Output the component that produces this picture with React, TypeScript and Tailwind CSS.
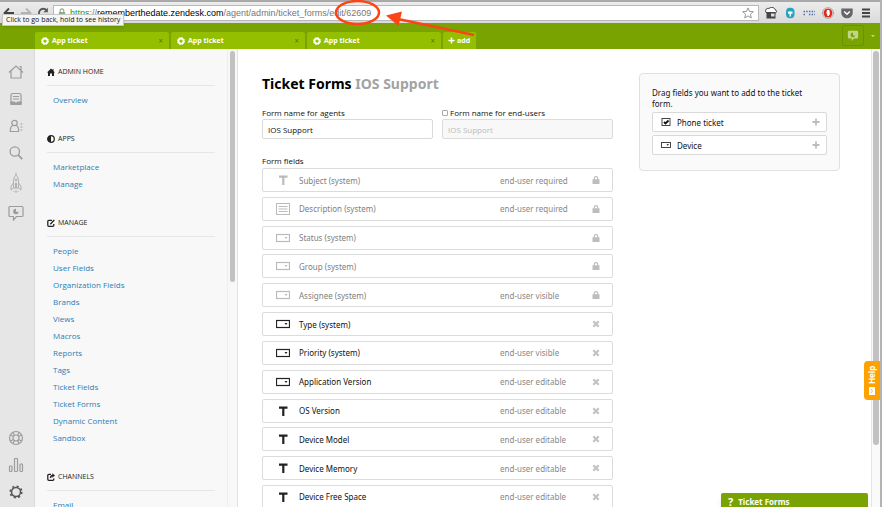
import { Fragment, type ReactNode } from "react";

const UI = "font-['Open_Sans','Noto_Sans',sans-serif]";

function TabIcon() {
  return (
    <svg viewBox="0 0 16 16" className="size-2 shrink-0" fill="none" stroke="white">
      <circle cx="8" cy="8" r="5" strokeWidth="3.5" />
      <circle cx="8" cy="8" r="7" strokeWidth="2" strokeDasharray="3 2.5" />
    </svg>
  );
}

function ArrowIcon({ flip, color }: { flip?: boolean; color: string }) {
  return (
    <svg viewBox="0 0 12 12" className={flip ? "size-3 -scale-x-100" : "size-3"} fill="none" stroke={color} strokeWidth="1.8">
      <path d="M11 6H2M6 1.5 1.5 6 6 10.5" />
    </svg>
  );
}

function BrowserBar() {
  return (
    <div className="relative flex h-[23px] shrink-0 items-center border-t-2 border-[#a9a9a9] bg-gradient-to-b from-[#ececec] to-[#dadada] pr-2">
      <button aria-label="Back" className="ml-[3px]"><ArrowIcon color="#444" /></button>
      <button aria-label="Forward" className="ml-[5px]"><ArrowIcon flip color="#b5b5b5" /></button>
      <button aria-label="Reload" className="ml-[5px]">
        <svg viewBox="0 0 12 12" className="size-3" fill="none" stroke="#555" strokeWidth="1.8">
          <path d="M9.5 3.2A4.3 4.3 0 1 0 10.3 7.5" />
          <path d="M10.8.8v4.4H6.4z" fill="#555" stroke="none" />
        </svg>
      </button>
      <div className="ml-1 flex h-4 min-w-0 flex-1 items-center border border-[#b9b9b9] bg-white px-1">
        <svg viewBox="0 0 8 10" className="mr-1 h-[9px] w-2 shrink-0">
          <path d="M2 5V3a2 2 0 0 1 4 0v2" fill="none" stroke="#999" strokeWidth="1.2" />
          <rect x="0.5" y="4.5" width="7" height="5" rx=".8" fill="#83b873" />
        </svg>
        <div className="min-w-0 flex-1 whitespace-nowrap font-['Liberation_Sans',Arial,sans-serif] text-[9px] leading-3 text-[#777]">
          <span className="text-[#12a022]">https</span>://<span className="text-black">rememberthedate.zendesk.com</span>/agent/admin/ticket_forms/edit/62609
        </div>
        <svg viewBox="0 0 24 24" className="size-3 shrink-0" fill="none" stroke="#8a8a8a" strokeWidth="1.8">
          <path d="m12 1.800 3 7 7.600.6-5.800 5 1.800 7.400L12 17.800l-6.600 4 1.800-7.400-5.800-5 7.600-.6z" />
        </svg>
      </div>
      <div className="ml-[6px] flex items-center gap-[7px]">
        <svg viewBox="0 0 12 12" className="size-3">
          <path d="M1 5.500C-.3 2.500 2 .8 4 1.500 6-.3 9.500.3 10 2.500c2 .8 1.800 3 .4 3.500z" fill="#fff" stroke="#333" />
          <path d="M1.500 5h9v6.500h-9z" fill="#444" /><path d="M6 6.500h3.500v3H6z" fill="#ddd" />
        </svg>
        <svg viewBox="0 0 12 12" className="size-3">
          <rect x="2" y=".8" width="8.500" height="10.500" rx="4" fill="#25a4bf" />
          <path d="M4 4.500h4.500v2.200H4zM5.600 6h1.300v3.500H5.600z" fill="#fff" />
        </svg>
        <svg viewBox="0 0 12 12" className="size-3" stroke="#536ea3" strokeWidth="1.600" strokeDasharray="1.500 1.200">
          <path d="M.5 4.500H12M.5 7.500H3M5.900 7.500H12" />
        </svg>
        <svg viewBox="0 0 12 12" className="size-3">
          <circle cx="6" cy="6" r="5.800" fill="#999" /><circle cx="6" cy="6" r="5" fill="#fff" /><circle cx="6" cy="6" r="4.500" fill="#dd2b20" />
          <path d="M4.400 6 5 3h2.300l.5 2.500v1.500L6.800 9H5.600z" fill="#fff" />
        </svg>
        <svg viewBox="0 0 12 12" className="size-3">
          <path d="M.3 1.500h11.400V6A5.700 5.300 0 0 1 .3 6z" fill="#666" />
          <path d="m3.200 4.500 2.800 2.700 2.800-2.700" fill="none" stroke="#fff" strokeWidth="1.500" />
        </svg>
        <button aria-label="Browser menu">
          <svg viewBox="0 0 12 12" className="size-3" stroke="#444" strokeWidth="1.800">
            <path d="M2 2.500h8M2 6h8M2 9.500h8" />
          </svg>
        </button>
      </div>
      <div role="tooltip" className="absolute left-[2px] top-[12px] z-10 h-3 whitespace-nowrap border border-[#c8c8c8] bg-[#f5f5f5] px-[3px] text-[7px] leading-[10px] text-[#111] shadow">
        Click to go back, hold to see history
      </div>
    </div>
  );
}

function Header() {
  return (
    <header className="flex h-[26px] shrink-0 items-end bg-[#78a300] pl-[35px]">
      <div className="flex gap-[2px] text-[7px] font-bold leading-[17px] text-white">
        {[0, 1, 2].map((n) => (
          <div key={n} className="flex h-[17px] w-[134px] items-center rounded-t-xs bg-[#93bf00] pl-[6px] pr-[6px]">
            <TabIcon />
            <span className="ml-[3px] flex-1">App ticket</span>
            <button aria-label="Close tab" className="text-[8px] leading-none text-[#638a00]">×</button>
          </div>
        ))}
        <button className="flex h-[17px] w-[33px] items-center gap-[2px] rounded-t-xs bg-[#93bf00] pl-[5px]">
          <svg viewBox="0 0 8 8" className="size-[7px]" stroke="white" strokeWidth="1.800"><path d="M4 .5v7M.5 4h7" /></svg>
          add
        </button>
      </div>
      <div className="ml-auto mb-[3px] flex items-center gap-[6px] pr-[4px]">
        <button aria-label="Chat" className="flex h-[21px] w-[22px] items-center justify-center rounded-xs border border-[#6b9200]">
          <svg viewBox="0 0 14 14" className="size-3">
            <path d="M2.500 1h9A1.500 1.500 0 0 1 13 2.500v6a1.500 1.500 0 0 1-1.500 1.500H8l-2.500 3v-3h-3A1.500 1.500 0 0 1 1 8.500v-6A1.500 1.500 0 0 1 2.500 1" fill="#bfd68a" />
            <path d="M9.500 6.300A2.700 2.700 0 1 1 7 3v3.300z" fill="#78a300" />
          </svg>
        </button>
        <button aria-label="Account menu">
          <svg viewBox="0 0 6 4" className="h-1 w-[6px]"><path d="M1 1h4L3 3.200z" fill="#bfd68a" /></svg>
        </button>
      </div>
    </header>
  );
}

function RailIcon({ label, children, tone = "text-[#9c9c9c]" }: { label: string; children: ReactNode; tone?: string }) {
  return (
    <button aria-label={label} className={tone}>
      <svg viewBox="0 0 16 16" className="size-4" fill="none" stroke="currentColor" strokeWidth="1.200">{children}</svg>
    </button>
  );
}

function Rail() {
  return (
    <nav aria-label="Main" className="flex w-[35px] shrink-0 flex-col items-center justify-between border-r border-[#d9d9d9] bg-[#e6e6e6] pb-[7px] pr-[2px] pt-[15px]">
      <div className="flex flex-col gap-[11px]">
        <RailIcon label="Home"><path d="M1 8.500 8 2l7 6.500M3 7v7h10V7M11.500 2.500h1.500V6" /></RailIcon>
        <RailIcon label="Views">
          <rect x="3" y="2.500" width="10" height="11" rx="1.500" /><path d="M5 5.500h6M5 8h6" /><path d="M3 11h3.500l.5 1h2l.5-1H13v2.500H3z" fill="currentColor" />
        </RailIcon>
        <RailIcon label="Users">
          <circle cx="6.500" cy="5" r="2.700" /><path d="M4.700 7.500C3 8 2.300 9 2.300 13.500h8.400c0-4.500-.7-5.500-2.400-6" /><path d="M12.500 6H15M12.500 9H15M12.500 12H15" strokeDasharray="1.800 .6" />
        </RailIcon>
        <RailIcon label="Search"><circle cx="6.800" cy="6.500" r="4.700" strokeWidth="1.300" /><path d="m10.200 10 4 4.200" strokeWidth="1.800" /></RailIcon>
        <button aria-label="Launch" className="text-[#b0b0b0]">
          <svg viewBox="0 0 16 22" className="h-[22px] w-4" fill="none" stroke="currentColor">
            <path d="M8 .5v3M8 3c-2 2-2.500 4-2.500 6.500V16h5V9.500C10.500 7 10 5 8 3M5.500 11 3 14v4l2.500-2M10.500 11l2.500 3v4l-2.500-2M7.500 11h1v5h-1z" />
            <circle cx="8" cy="8" r="1" /><path d="M6 19v1M8 18v3M10 19v1" />
          </svg>
        </button>
        <RailIcon label="Chat">
          <path d="M2 1.500h12a1 1 0 0 1 1 1v8a1 1 0 0 1-1 1H8.500L5.500 15v-3.500H2a1 1 0 0 1-1-1v-8a1 1 0 0 1 1-1" />
          <path d="M10.700 6.700A2.800 2.800 0 1 1 8 3.700v3z" fill="currentColor" stroke="none" />
        </RailIcon>
      </div>
      <div className="flex flex-col gap-[11px]">
        <RailIcon label="Help"><circle cx="8" cy="8" r="6.500" /><circle cx="8" cy="8" r="3" /><path d="m2.500 5 3 1.500M5 2.500 6.500 5.500M13.500 5l-3 1.500M11 2.500 9.500 5.500M2.500 11l3-1.500M5 13.500l1.500-3M13.500 11l-3-1.500M11 13.500l-1.500-3" /></RailIcon>
        <RailIcon label="Reports"><rect x="1.500" y="9" width="2.500" height="5.500" rx=".8" /><rect x="6.500" y="1.500" width="3" height="13" rx=".8" /><rect x="12" y="7" width="2.500" height="7.500" rx=".8" /></RailIcon>
        <RailIcon label="Admin" tone="text-[#555]"><circle cx="8" cy="8" r="4.500" strokeWidth="1.500" /><circle cx="8" cy="8" r="5.800" strokeWidth="1.600" strokeDasharray="2.100 2.450" /></RailIcon>
      </div>
    </nav>
  );
}

const sections: { title: string; icon: ReactNode; links: string[] }[] = [
  { title: "ADMIN HOME", icon: <path d="M0 4.500 4 .5l1.500 1.500V1h1v2L8 4.500H7V8H5V5.500H3V8H1V4.500z" fill="currentColor" />, links: ["Overview"] },
  { title: "APPS", icon: <><circle cx="4" cy="4" r="3.300" fill="none" stroke="currentColor" strokeWidth="1.200" /><path d="M4 .7a3.300 3.300 0 0 0 0 6.600z" fill="currentColor" /></>, links: ["Marketplace", "Manage"] },
  {
    title: "MANAGE",
    icon: <path d="M5 1.300H1.800a1 1 0 0 0-1 1v4a1 1 0 0 0 1 1h4a1 1 0 0 0 1-1V5M3.300 5.200 7.300 1" fill="none" stroke="currentColor" strokeWidth="1.300" />,
    links: ["People", "User Fields", "Organization Fields", "Brands", "Views", "Macros", "Reports", "Tags", "Ticket Fields", "Ticket Forms", "Dynamic Content", "Sandbox"],
  },
  { title: "CHANNELS", icon: <><path d="M4 1.300H1.800a1 1 0 0 0-1 1v4a1 1 0 0 0 1 1h4a1 1 0 0 0 1-1V5.500M3.500 5c0-2 1-2.500 2.500-2.500" fill="none" stroke="currentColor" strokeWidth="1.300" /><path d="m5.300.3 2.700 2.200-2.700 2.200z" fill="currentColor" /></>, links: ["Email"] },
];

function Sidebar() {
  return (
    <aside className="flex w-[203px] shrink-0 overflow-hidden border-r border-[#e2e2e2] bg-[#f8f8f8]">
      <div className="flex min-w-0 flex-1 flex-col gap-[23px] border-r border-[#eeeeee] pl-3 pr-3 pt-[15px]">
        {sections.map((s) => (
          <section key={s.title}>
            <h2 className="flex h-[22px] items-start gap-[3px] border-b border-[#e6e6e6] text-[7px] leading-4 text-[#222]">
              <svg viewBox="0 0 8 8" className="mt-1 size-2">{s.icon}</svg>
              {s.title}
            </h2>
            <ul className="mt-[5px] pl-[6px] text-[8px] leading-[17px] text-[#2b7db5]">
              {s.links.map((l) => (
                <li key={l} className="h-[17px]"><a href="#">{l}</a></li>
              ))}
            </ul>
          </section>
        ))}
      </div>
      <div className="w-[9px] shrink-0 px-[2px] pt-[2px]">
        <div className="h-[231px] rounded-full bg-[#c1c1c1]" />
      </div>
    </aside>
  );
}

type Kind = "text" | "area" | "select" | "check";

function FieldIcon({ kind }: { kind: Kind }) {
  return (
    <svg viewBox="0 0 14 12" className="h-3 w-[14px] shrink-0" fill="none" stroke="currentColor">
      {kind === "text" && <path d="M3 1.500h8.500v2.300H8.400V11H6.200V3.800H3z" fill="currentColor" stroke="none" />}
      {kind === "area" && <><rect x=".5" y=".5" width="13" height="11" /><path d="M2.500 3.500h9M2.500 6h9M2.500 8.500h9" /></>}
      {kind === "select" && <><rect x=".5" y="2.500" width="13" height="7" strokeWidth="1.200" /><path d="M8.500 5h3L10 7z" fill="currentColor" stroke="none" /></>}
    </svg>
  );
}

function SmallIcon({ kind }: { kind: Kind }) {
  return (
    <svg viewBox="0 0 10 10" className="size-[10px] shrink-0" fill="none" stroke="#444">
      {kind === "check" ? <><rect x="1" y="1.500" width="8" height="7" /><path d="m3 5 1.500 1.500L7.500 3.500" strokeWidth="1.800" stroke="#111" /></> : <><rect x=".5" y="2.500" width="9" height="5" /><path d="M5.500 4h2.500L6.700 6z" fill="#444" stroke="none" /></>}
    </svg>
  );
}

const fields: { name: string; kind: Kind; locked?: boolean; note?: string }[] = [
  { name: "Subject (system)", kind: "text", locked: true, note: "end-user required" },
  { name: "Description (system)", kind: "area", locked: true, note: "end-user required" },
  { name: "Status (system)", kind: "select", locked: true },
  { name: "Group (system)", kind: "select", locked: true },
  { name: "Assignee (system)", kind: "select", locked: true, note: "end-user visible" },
  { name: "Type (system)", kind: "select" },
  { name: "Priority (system)", kind: "select", note: "end-user visible" },
  { name: "Application Version", kind: "select", note: "end-user editable" },
  { name: "OS Version", kind: "text", note: "end-user editable" },
  { name: "Device Model", kind: "text", note: "end-user editable" },
  { name: "Device Memory", kind: "text", note: "end-user editable" },
  { name: "Device Free Space", kind: "text", note: "end-user editable" },
];

function FieldRow({ name, kind, locked, note }: (typeof fields)[number]) {
  return (
    <li className="flex h-6 items-center rounded-xs border border-[#dcdcdc] bg-white pl-[13px] pr-3 font-['Noto_Sans','Open_Sans',sans-serif]">
      <span className={locked ? "text-[#bbb]" : "text-[#222]"}><FieldIcon kind={kind} /></span>
      <span className={locked ? "ml-[9px] flex-1 text-[#808080]" : "ml-[9px] flex-1 text-[#111]"}>{name}</span>
      <span className="w-[92px] text-[#888]">{note}</span>
      {locked ? (
        <svg viewBox="0 0 8 8" className="size-2" aria-label="Locked"><path d="M2.300 3.500V2.300a1.700 1.700 0 0 1 3.400 0v1.200" fill="none" stroke="#bdbdbd" strokeWidth="1.200" /><path d="M.5 3.200h7V8h-7z" fill="#bdbdbd" /></svg>
      ) : (
        <button aria-label={"Remove " + name}>
          <svg viewBox="0 0 8 8" className="size-2" stroke="#c2c2c2" strokeWidth="2.200"><path d="m1.300 1.300 5.400 5.400M6.700 1.300 1.300 6.700" /></svg>
        </button>
      )}
    </li>
  );
}

function Main() {
  return (
    <main className="flex min-w-0 flex-1 items-start justify-between overflow-hidden bg-white pl-6 pr-[31px] text-[8px] leading-[11px] text-[#111]">
      <div className="w-[351px] pt-[26px]">
        <h1 className="h-[18px] whitespace-nowrap font-['Noto_Sans','Open_Sans',sans-serif] text-[14px] font-bold leading-[18px] text-black">
          Ticket Forms <span className="text-[#a3a3a3]">IOS Support</span>
        </h1>
        <div className="mt-[14px] grid grid-cols-2 gap-[9px]">
          <div>
            <label htmlFor="agents" className="block h-[11px]">Form name for agents</label>
            <input id="agents" defaultValue="IOS Support" className="mt-[1px] block h-5 w-full rounded-xs border border-[#d9d9d9] px-[5px] text-[8px]" />
          </div>
          <div>
            <div className="flex h-[11px] items-center gap-[2px]">
              <input id="toggle" type="checkbox" className="size-[6px] appearance-none rounded-[1px] border border-[#aaa]" />
              <label htmlFor="toggle">Form name for end-users</label>
            </div>
            <input aria-label="Form name for end-users" disabled defaultValue="IOS Support" className="mt-[1px] block h-5 w-full rounded-xs border border-[#dcdcdc] bg-[#f8f8f8] px-[5px] text-[8px] text-[#bbb]" />
          </div>
        </div>
        <h2 className="mt-[16px]">Form fields</h2>
        <ul className="mt-[2px] flex h-[341px] flex-col justify-between">
          {fields.map((f) => <FieldRow key={f.name} {...f} />)}
        </ul>
      </div>
      <section className="mt-6 w-[201px] rounded-sm border border-[#e0e0e0] bg-[#fafafa] px-3 pb-[15px] pt-[13px] font-['Noto_Sans','Open_Sans',sans-serif]">
        <p className="pr-3">Drag fields you want to add to the ticket form.</p>
        <ul className="mt-[3px] flex flex-col gap-[3px]">
          {([["Phone ticket", "check"], ["Device", "select"]] as [string, Kind][]).map(([name, kind]) => (
            <li key={name} className="flex h-5 items-center rounded-xs border border-[#d9d9d9] bg-white pl-2 pr-[6px]">
              <SmallIcon kind={kind} />
              <span className="ml-[6px] flex-1">{name}</span>
              <button aria-label={"Add " + name}>
                <svg viewBox="0 0 8 8" className="size-2" stroke="#bdbdbd" strokeWidth="1.800"><path d="M4 .5v7M.5 4h7" /></svg>
              </button>
            </li>
          ))}
        </ul>
      </section>
    </main>
  );
}

export default function App() {
  return (
    <div className={"relative flex h-screen overflow-hidden " + UI}>
      <div className="flex min-w-0 flex-1 flex-col">
        <BrowserBar />
        <Header />
        <div className="flex min-h-0 flex-1">
          <Rail />
          <Sidebar />
          <Main />
          <div className="w-[9px] shrink-0 border-l border-[#e5e5e5] bg-[#fafafa] px-[1px] pt-[2px]">
            <div className="h-[394px] rounded-full bg-[#c1c1c1]" />
          </div>
        </div>
      </div>
      <div className="w-[2px] shrink-0 bg-[#b3b3b3]" />

      <svg viewBox="0 0 150 40" className="absolute left-[330px] top-0 z-20 h-10 w-[150px]" fill="none" stroke="#fb4516">
        <ellipse cx="27.500" cy="12.500" rx="21.500" ry="11.500" strokeWidth="2.500" />
        <path d="M144 35 68 19" strokeWidth="2.800" />
        <path d="m56 15.500 16-4-3.500 14.500z" fill="#fb4516" stroke="none" />
      </svg>

      <button className="absolute right-[2px] top-[361px] flex h-[39px] w-4 rotate-180 items-center justify-center gap-[3px] rounded-r bg-[#ffa200] text-[8px] font-bold leading-4 text-white [writing-mode:vertical-rl]">
        <svg viewBox="0 0 6 8" className="h-2 w-[6px]"><path d="M0 0h6v8H0z" fill="#fff" /><path d="M4 2 2.500 4 4 6" fill="none" stroke="#ffa200" strokeWidth=".7" /></svg>
        Help
      </button>
      <button className="absolute bottom-0 right-[14px] flex h-[14px] w-[147px] items-center gap-[5px] overflow-hidden rounded-t-xs bg-[#78a300] pl-[7px] pt-1 font-['Noto_Sans','Open_Sans',sans-serif] text-[8px] font-bold leading-[14px] text-white shadow-md">
        <span className="text-[11px]">?</span>Ticket Forms
      </button>
    </div>
  );
}
